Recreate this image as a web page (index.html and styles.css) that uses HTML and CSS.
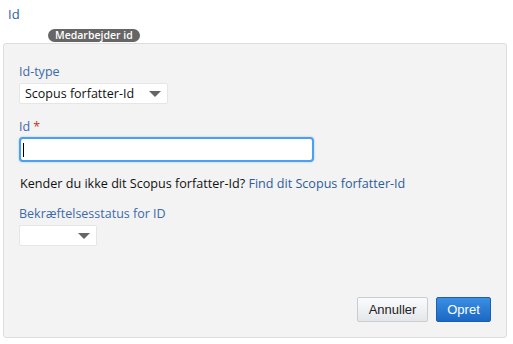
FILE: index.html
```html
<!DOCTYPE html>
<html>
<head>
<meta charset="utf-8">
<link rel="stylesheet" href="styles.css">
</head>
<body>
<div class="page">
  <div class="title">Id</div>
  <div class="badge-row"><span class="badge">Medarbejder id</span></div>
  <div class="panel">
    <div class="field">
      <label class="label">Id-type</label>
      <div class="select wide"><span>Scopus forfatter-Id</span><span class="caret"></span></div>
    </div>
    <div class="field">
      <label class="label">Id<span class="req">*</span></label>
      <div class="input"><span class="cursor"></span></div>
    </div>
    <p class="hint">Kender du ikke dit Scopus forfatter-Id? <a class="link">Find dit Scopus forfatter-Id</a></p>
    <div class="field">
      <label class="label">Bekræftelsesstatus for ID</label>
      <div class="select narrow"><span></span><span class="caret"></span></div>
    </div>
    <div class="actions">
      <button class="btn cancel">Annuller</button>
      <button class="btn primary">Opret</button>
    </div>
  </div>
</div>
</body>
</html>
```

FILE: styles.css
```css
html, body { margin: 0; padding: 0; background: #fff; }
body { font-family: "Open Sans", "Liberation Sans", sans-serif; font-size: 12px; color: #111; }
.page { width: 513px; height: 344px; box-sizing: border-box; padding: 6px 6px 0 3px; }
.title { color: #2e5d9a; font-size: 13px; line-height: 16px; padding-left: 5px; }
.badge-row { padding-left: 45px; margin-top: 4px; height: 14px; }
.badge { display: inline-block; background: #666; color: #fff; font-size: 10.5px; font-weight: 600; line-height: 13px; padding: 0 7px; border-radius: 7px; }
.panel { margin-top: 3px; height: 295px; box-sizing: border-box; background: #f3f3f3; border: 1px solid #ddd; border-radius: 3px; padding: 20px 15px 15px 15px; display: flex; flex-direction: column; }
.field { display: flex; flex-direction: column; align-items: flex-start; }
.label { color: #3d6aa8; font-size: 12.5px; line-height: 16px; }
.req { color: #c0392b; margin-left: 3px; }
.select { margin-top: 3px; height: 21px; background: #fff; border: 1px solid #e6e6e6; border-radius: 2px; box-sizing: border-box; display: flex; align-items: center; justify-content: space-between; padding: 0 6px 0 5px; font-size: 12.5px; color: #111; }
.select.wide { width: 149px; }
.select.narrow { width: 78px; }
.caret { width: 0; height: 0; border-left: 6px solid transparent; border-right: 6px solid transparent; border-top: 6px solid #666; }
.field + .field { margin-top: 15px; }
.input { margin-top: 2px; width: 295px; height: 25px; box-sizing: border-box; background: #fff; border: 2px solid #4d9ff0; border-radius: 4px; box-shadow: 0 0 2px #8bbff5; display: flex; align-items: center; padding-left: 2px; }
.cursor { width: 1px; height: 14px; background: #000; }
.hint { margin: 14px 0 0 1px; font-size: 12.6px; line-height: 16px; color: #111; }
.link { color: #2e5d9a; }
.hint + .field { margin-top: 14px; }
.actions { margin-top: auto; display: flex; justify-content: flex-end; gap: 8px; padding-right: 0; }
.btn { font-family: "Liberation Sans", Arial, sans-serif; font-size: 13px; height: 25px; border-radius: 2px; padding: 0 9px; cursor: pointer; }
.cancel { background: linear-gradient(#fafbfc, #e4e7ea); border: 1px solid #c9cdd1; color: #222; width: 71px; }
.primary { background: linear-gradient(#3a8fe3, #1b68c4); border: 1px solid #1a5fb4; color: #fff; width: 55px; }
```
